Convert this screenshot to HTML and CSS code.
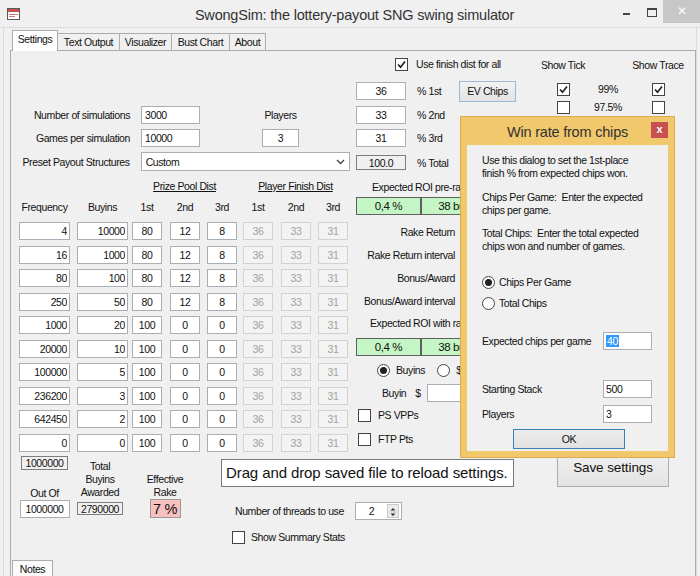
FILE: index.html
```html
<!DOCTYPE html>
<html lang="en">
<head>
  <meta charset="UTF-8" />
  <title>SwongSim: the lottery-payout SNG swing simulator</title>
  <link rel="stylesheet" href="styles.css">
</head>
<body>
  <div class="window">
    <div class="titlebar">
      <div>
        <svg class="app-icon" width="13" height="12" viewBox="0 0 13 12">
          <rect x="0.5" y="0.5" width="12" height="11" fill="#fff" stroke="#5a5a5a"/>
          <rect x="1" y="1" width="11" height="3" fill="#c4504c"/>
          <rect x="2" y="6" width="9" height="1" fill="#d27a78"/>
          <rect x="2" y="8" width="6" height="1" fill="#d27a78"/>
        </svg>
      </div>
      <div class="title">SwongSim: the lottery-payout SNG swing simulator</div>
      <div class="caption">
        <span class="cap-min"></span>
        <span class="cap-max"></span>
        <span class="cap-close">&#x2715;</span>
      </div>
    </div>

    <div class="client">
      <div class="tabs">
        <div class="tab active t-settings">Settings</div>
        <div class="tab t-text">Text Output</div>
        <div class="tab t-vis">Visualizer</div>
        <div class="tab t-bust">Bust Chart</div>
        <div class="tab t-about">About</div>
      </div>

      <div class="page">
        <div class="top">
          <!-- left: run settings + payout table -->
          <div class="left">
            <div class="frow first">
              <span class="lbl">Number of simulations</span>
              <input class="tb w59" value="3000">
              <span class="players-lbl">Players</span>
            </div>
            <div class="frow">
              <span class="lbl">Games per simulation</span>
              <input class="tb w59" value="10000">
              <input class="tb c players-tb" value="3">
            </div>
            <div class="frow preset">
              <span class="lbl">Preset Payout Structures</span>
              <div class="combo">
                <span>Custom</span>
                <svg width="9" height="6" viewBox="0 0 9 6"><path d="M1 1l3.5 3.5L8 1" fill="none" stroke="#444" stroke-width="1.3"/></svg>
              </div>
            </div>

            <div class="dist-head">
              <span class="u pool">Prize Pool Dist</span>
              <span class="u finish-dist">Player Finish Dist</span>
            </div>

            <div class="col-head">
              <span class="wide">Frequency</span><span class="wide">Buyins</span>
              <span>1st</span><span>2nd</span><span>3rd</span>
              <span>1st</span><span>2nd</span><span>3rd</span>
            </div>

            <div class="grid">
              <input class="tb r w51" value="4"><input class="tb r w51" value="10000"><input class="tb c w30" value="80"><input class="tb c w30" value="12"><input class="tb c w30" value="8"><input class="tb c w30 dis" value="36"><input class="tb c w30 dis" value="33"><input class="tb c w30 dis" value="31">
              <input class="tb r w51" value="16"><input class="tb r w51" value="1000"><input class="tb c w30" value="80"><input class="tb c w30" value="12"><input class="tb c w30" value="8"><input class="tb c w30 dis" value="36"><input class="tb c w30 dis" value="33"><input class="tb c w30 dis" value="31">
              <input class="tb r w51" value="80"><input class="tb r w51" value="100"><input class="tb c w30" value="80"><input class="tb c w30" value="12"><input class="tb c w30" value="8"><input class="tb c w30 dis" value="36"><input class="tb c w30 dis" value="33"><input class="tb c w30 dis" value="31">
              <input class="tb r w51" value="250"><input class="tb r w51" value="50"><input class="tb c w30" value="80"><input class="tb c w30" value="12"><input class="tb c w30" value="8"><input class="tb c w30 dis" value="36"><input class="tb c w30 dis" value="33"><input class="tb c w30 dis" value="31">
              <input class="tb r w51" value="1000"><input class="tb r w51" value="20"><input class="tb c w30" value="100"><input class="tb c w30" value="0"><input class="tb c w30" value="0"><input class="tb c w30 dis" value="36"><input class="tb c w30 dis" value="33"><input class="tb c w30 dis" value="31">
              <input class="tb r w51" value="20000"><input class="tb r w51" value="10"><input class="tb c w30" value="100"><input class="tb c w30" value="0"><input class="tb c w30" value="0"><input class="tb c w30 dis" value="36"><input class="tb c w30 dis" value="33"><input class="tb c w30 dis" value="31">
              <input class="tb r w51" value="100000"><input class="tb r w51" value="5"><input class="tb c w30" value="100"><input class="tb c w30" value="0"><input class="tb c w30" value="0"><input class="tb c w30 dis" value="36"><input class="tb c w30 dis" value="33"><input class="tb c w30 dis" value="31">
              <input class="tb r w51" value="236200"><input class="tb r w51" value="3"><input class="tb c w30" value="100"><input class="tb c w30" value="0"><input class="tb c w30" value="0"><input class="tb c w30 dis" value="36"><input class="tb c w30 dis" value="33"><input class="tb c w30 dis" value="31">
              <input class="tb r w51" value="642450"><input class="tb r w51" value="2"><input class="tb c w30" value="100"><input class="tb c w30" value="0"><input class="tb c w30" value="0"><input class="tb c w30 dis" value="36"><input class="tb c w30 dis" value="33"><input class="tb c w30 dis" value="31">
              <input class="tb r w51" value="0"><input class="tb r w51" value="0"><input class="tb c w30" value="100"><input class="tb c w30" value="0"><input class="tb c w30" value="0"><input class="tb c w30 dis" value="36"><input class="tb c w30 dis" value="33"><input class="tb c w30 dis" value="31">
            </div>
          </div>

          <!-- right: finish dist, ROI, rake -->
          <div class="right">
            <div class="finish">
              <div class="chkrow use-all">
                <span class="chk"><svg width="11" height="11" viewBox="0 0 11 11"><path d="M2 5.5l2.5 2.7L9 2.5" fill="none" stroke="#222" stroke-width="1.7"/></svg></span>
                <span>Use finish dist for all</span>
              </div>
              <div class="pct-row first">
                <input class="tb c w50" value="36"><span class="pct-lbl">% 1st</span>
                <button class="btn ev">EV Chips</button>
              </div>
              <div class="pct-row"><input class="tb c w50" value="33"><span class="pct-lbl">% 2nd</span></div>
              <div class="pct-row"><input class="tb c w50" value="31"><span class="pct-lbl">% 3rd</span></div>
              <div class="pct-row total"><span class="ro w50">100.0</span><span class="pct-lbl">% Total</span></div>

              <div class="roi-lbl pre">Expected ROI pre-rake</div>
              <div class="green-pair"><span class="green g1">0,4 %</span><span class="green g2">38 buyins</span></div>

              <div class="rr-row first"><span class="rr-lbl">Rake Return</span><input class="tb w60"></div>
              <div class="rr-row"><span class="rr-lbl">Rake Return interval</span><input class="tb w60"></div>
              <div class="rr-row"><span class="rr-lbl">Bonus/Award</span><input class="tb w60"></div>
              <div class="rr-row"><span class="rr-lbl">Bonus/Award interval</span><input class="tb w60"></div>

              <div class="roi-lbl with">Expected ROI with rake</div>
              <div class="green-pair second"><span class="green g1">0,4 %</span><span class="green g2">38 buyins</span></div>

              <div class="radio-row">
                <span class="radio on"></span><span class="rl">Buyins</span>
                <span class="radio r2"></span><span class="rl">$</span>
              </div>
              <div class="buyin-row"><span>Buyin</span><span class="dollar">$</span><input class="tb w70"></div>
              <div class="chkrow ps"><span class="chk"></span><span>PS VPPs</span></div>
              <div class="chkrow ftp"><span class="chk"></span><span>FTP Pts</span></div>
            </div>

            <div class="ticks">
              <div class="tick-row head"><span>Show Tick</span><span></span><span>Show Trace</span></div>
              <div class="tick-row first">
                <span class="chk"><svg width="11" height="11" viewBox="0 0 11 11"><path d="M2 5.5l2.5 2.7L9 2.5" fill="none" stroke="#222" stroke-width="1.7"/></svg></span>
                <span>99%</span>
                <span class="chk"><svg width="11" height="11" viewBox="0 0 11 11"><path d="M2 5.5l2.5 2.7L9 2.5" fill="none" stroke="#222" stroke-width="1.7"/></svg></span>
              </div>
              <div class="tick-row"><span class="chk"></span><span>97.5%</span><span class="chk"></span></div>
            </div>
          </div>
        </div>

        <div class="bottom">
          <div class="totals">
            <div class="tcol c1">
              <span class="ro small first">1000000</span>
              <span class="outof">Out Of</span>
              <input class="tb c w50" value="1000000">
            </div>
            <div class="tcol c2">
              <span class="tlabel">Total<br>Buyins<br>Awarded</span>
              <span class="ro small">2790000</span>
            </div>
            <div class="tcol c3">
              <span class="tlabel">Effective<br>Rake</span>
              <span class="rake">7 %</span>
            </div>
          </div>

          <div class="middle">
            <div class="drop">Drag and drop saved file to reload settings.</div>
            <div class="threads">
              <span class="threads-lbl">Number of threads to use</span>
              <div class="spin">
                <span class="spin-val">2</span>
                <span class="spin-btns"><svg width="10" height="14" viewBox="0 0 10 14"><path d="M5 3L7.5 5.5H2.5Z M2.5 8.5H7.5L5 11Z" fill="#333"/><path d="M1 7H9" stroke="#c9c9c9"/></svg></span>
              </div>
            </div>
            <div class="chkrow summary"><span class="chk"></span><span>Show Summary Stats</span></div>
          </div>

          <button class="btn save">Save settings</button>
        </div>

        <div class="notes-strip"><div class="tab notes">Notes</div></div>
      </div>
    </div>

    <div class="dialog">
      <div class="dlg-title">
        <span></span>
        <span class="dlg-caption">Win rate from chips</span>
        <span class="dlg-close">x</span>
      </div>
      <div class="dlg-body">
        <p class="dlg-text p1">Use this dialog to set the 1st-place<br>finish % from expected chips won.</p>
        <p class="dlg-text p2">Chips Per Game:&nbsp; Enter the expected<br>chips per game.</p>
        <p class="dlg-text p3">Total Chips:&nbsp; Enter the total expected<br>chips won and number of games.</p>
        <div class="dlg-radio r1"><span class="radio on"></span><span>Chips Per Game</span></div>
        <div class="dlg-radio r2"><span class="radio"></span><span>Total Chips</span></div>
        <div class="dlg-field f1"><span>Expected chips per game</span><span class="tb dlg-tb"><span class="sel">40</span></span></div>
        <div class="dlg-field f2"><span>Starting Stack</span><input class="tb dlg-tb" value="500"></div>
        <div class="dlg-field f3"><span>Players</span><input class="tb dlg-tb" value="3"></div>
        <button class="btn ok">OK</button>
      </div>
    </div>
  </div>
</body>
</html>
```

FILE: styles.css
```css
* {
  box-sizing: border-box;
}

body {
  margin: 0;
  background-color: #f0f0f0;
  font-family: "Liberation Sans", sans-serif;
  font-size: 10.5px;
  letter-spacing: -0.4px;
  color: #111;
}

.window {
  position: relative;
  width: 700px;
  height: 576px;
  overflow: hidden;
  background-color: #f0f0f0;
}

/* title bar */
.titlebar {
  display: grid;
  grid-template-columns: 100px 1fr 100px;
  height: 28px;
  border-bottom: 1px solid #dadada;
}

.app-icon {
  display: block;
  margin: 8px 0 0 7px;
}

.title {
  padding-left: 9px;
  text-align: center;
  font-size: 14.5px;
  letter-spacing: -0.2px;
  line-height: 30px;
  color: #333;
  white-space: nowrap;
}

.caption {
  display: flex;
  justify-content: flex-end;
  align-items: flex-start;
}

.cap-min {
  width: 7px;
  height: 2px;
  margin: 13px 17px 0 0;
  background: #444;
}

.cap-max {
  width: 10px;
  height: 9px;
  margin: 8px 6px 0 0;
  border: 1px solid #444;
  border-top-width: 2px;
}

.cap-close {
  width: 37px;
  height: 23px;
  background: #c7c7c7;
  color: #fff;
  text-align: center;
  line-height: 23px;
  font-size: 12px;
}

/* client + tabs */
.client {
  width: 694px;
  height: 548px;
  margin-left: 3px;
  border-left: 1px solid #dadada;
  border-right: 1px solid #dadada;
}

.tabs {
  display: flex;
  align-items: flex-end;
  height: 22px;
  padding-left: 8px;
}

.tab {
  height: 17px;
  margin-left: -1px;
  border: 1px solid #acacac;
  border-bottom: none;
  background: #f0f0f0;
  text-align: center;
  line-height: 16px;
  white-space: nowrap;
}

.tab:first-child {
  margin-left: 0;
}

.tab.active {
  position: relative;
  z-index: 1;
  height: 21px;
  margin-bottom: -1px;
  background: #fff;
  line-height: 17px;
}

.t-settings { width: 46px; }
.t-text { width: 63px; }
.t-vis { width: 53px; }
.t-bust { width: 59px; }
.t-about { width: 37px; }

.page {
  width: 686px;
  height: 526px;
  margin-left: 6px;
  border: 1px solid #acacac;
  border-bottom: none;
}

.top {
  display: flex;
  height: 401px;
}

/* generic controls */
.tb {
  height: 18px;
  margin: 0;
  padding: 0 3px;
  border: 1px solid #abadb3;
  background: #fff;
  font: inherit;
  letter-spacing: inherit;
  color: #111;
  outline: none;
}

.tb.r { text-align: right; padding-right: 2px; }
.tb.c { text-align: center; padding: 0 1px; }

.tb.dis {
  border-color: #d2d2d2;
  background: #f3f3f3;
  color: #a2a2a2;
}

.w30 { width: 30px; }
.w50 { width: 50px; }
.w51 { width: 51px; }
.w59 { width: 59px; }
.w60 { width: 60px; }
.w70 { width: 70px; }

.ro {
  display: flex;
  align-items: center;
  justify-content: center;
  height: 15px;
  border: 1px solid #7d7d7d;
  background: #f0f0f0;
}

.chk {
  flex: none;
  width: 13px;
  height: 13px;
  border: 1px solid #444;
  background: #fff;
}

.chk svg {
  display: block;
}

.radio {
  flex: none;
  display: flex;
  align-items: center;
  justify-content: center;
  width: 13px;
  height: 13px;
  border: 1px solid #444;
  border-radius: 50%;
  background: #fff;
}

.radio.on::after {
  content: "";
  width: 7px;
  height: 7px;
  border-radius: 50%;
  background: #222;
}

.btn {
  margin: 0;
  padding: 0;
  border: 1px solid #adadad;
  background: linear-gradient(#f2f2f2, #e3e3e3);
  font: inherit;
  letter-spacing: inherit;
  color: #111;
}

.chkrow {
  display: flex;
  align-items: center;
  height: 14px;
  white-space: nowrap;
}

/* left column */
.left {
  width: 339px;
}

.frow {
  display: flex;
  align-items: center;
  height: 18px;
  margin-top: 5px;
  white-space: nowrap;
}

.frow.first {
  margin-top: 55px;
}

.frow .lbl {
  width: 119px;
  margin-right: 11px;
  text-align: right;
}

.players-lbl {
  width: 37px;
  margin-left: 62px;
  text-align: center;
}

.players-tb {
  width: 37px;
  margin-left: 62px;
}

.frow.preset {
  height: 19px;
}

.combo {
  display: flex;
  align-items: center;
  justify-content: space-between;
  width: 210px;
  height: 19px;
  padding: 0 4px;
  border: 1px solid #abadb3;
  background: #fff;
}

.dist-head {
  display: flex;
  height: 14px;
  margin-top: 8px;
  line-height: 14px;
  white-space: nowrap;
}

.u {
  width: 105px;
  text-align: center;
  text-decoration: underline;
}

.pool { margin-left: 121px; }
.finish-dist { margin-left: 6px; }

.col-head,
.grid {
  display: grid;
  grid-template-columns: 58px 55px 38px 37px 36px 38px 37px 30px;
  padding-left: 8px;
}

.col-head {
  height: 14px;
  margin-top: 7px;
  line-height: 14px;
}

.col-head span {
  width: 30px;
  text-align: center;
}

.col-head .wide {
  width: 51px;
}

.grid {
  row-gap: 5.5px;
  margin-top: 8px;
}

/* right column */
.right {
  display: flex;
  flex: 1;
}

.finish {
  width: 180px;
  white-space: nowrap;
}

.use-all {
  margin-top: 6px;
  padding-left: 45px;
}

.use-all .chk {
  margin-right: 8px;
}

.pct-row {
  display: flex;
  align-items: center;
  height: 18px;
  margin-top: 5px;
}

.pct-row input,
.pct-row .ro {
  margin-left: 6px;
}

.pct-row.first {
  height: 20px;
  margin-top: 10px;
}

.pct-row.total {
  height: 15px;
  margin-top: 8px;
}

.pct-lbl {
  width: 42px;
  margin-left: 11px;
}

.btn.ev {
  width: 57px;
  height: 21px;
  border-color: #9cb8d6;
}

.roi-lbl {
  height: 14px;
  line-height: 14px;
}

.roi-lbl.pre {
  margin-top: 10px;
  padding-left: 22px;
}

.roi-lbl.with {
  margin-top: 6px;
  padding-left: 20px;
}

.green-pair {
  display: flex;
  height: 18px;
  margin: 3px 0 0 6px;
}

.green-pair.second {
  margin-top: 8px;
}

.green {
  display: flex;
  align-items: center;
  justify-content: center;
  height: 18px;
  border: 1px solid #5f5f5f;
  background: #c4f5c4;
  font-size: 11.5px;
}

.g1 { width: 65px; }
.g2 { width: 80px; }

.rr-row {
  display: flex;
  align-items: center;
  height: 18px;
  margin-top: 5px;
}

.rr-row.first {
  margin-top: 8px;
}

.rr-lbl {
  width: 105px;
  margin-right: 7px;
  text-align: right;
}

.radio-row {
  display: flex;
  align-items: center;
  height: 18px;
  margin-top: 5px;
  padding-left: 27px;
}

.radio-row .rl {
  margin-left: 6px;
}

.radio-row .r2 {
  margin-left: 12px;
}

.buyin-row {
  display: flex;
  align-items: center;
  height: 18px;
  margin-top: 5px;
  padding-left: 32px;
}

.buyin-row .dollar {
  margin: 0 6px 0 9px;
}

.chkrow.ps,
.chkrow.ftp {
  height: 18px;
  padding-left: 8px;
}

.chkrow.ps { margin-top: 4px; }
.chkrow.ftp { margin-top: 6px; }

.ps .chk,
.ftp .chk {
  margin-right: 7px;
}

.ticks {
  flex: 1;
  padding-left: 10px;
}

.tick-row {
  display: grid;
  grid-template-columns: 46px 44px 56px;
  align-items: center;
  justify-items: center;
  height: 14px;
  margin-top: 4px;
  white-space: nowrap;
}

.tick-row.head { margin-top: 7px; }
.tick-row.first { margin-top: 10px; }

/* bottom strip */
.bottom {
  display: flex;
  align-items: flex-start;
  height: 108px;
}

.totals {
  display: flex;
  align-items: flex-start;
  width: 210px;
  padding-left: 8px;
}

.tcol {
  display: flex;
  flex-direction: column;
  align-items: center;
  text-align: center;
}

.c1 { width: 51px; margin-right: 7px; }
.c2 { width: 46px; margin-right: 22px; }
.c3 { width: 40px; }

.ro.small {
  height: 14px;
  padding: 0 1px;
}

.c1 .ro.small {
  width: 47px;
  margin-top: 4px;
}

.c2 .ro.small {
  width: 46px;
  height: 13px;
  margin-top: 3px;
}

.outof {
  height: 12px;
  margin-top: 17px;
  line-height: 12px;
}

.c1 input {
  margin-top: 1px;
}

.tlabel {
  line-height: 13px;
  white-space: nowrap;
}

.c2 .tlabel { margin-top: 8px; }
.c3 .tlabel { margin-top: 21px; }

.rake {
  display: flex;
  align-items: center;
  justify-content: center;
  width: 31px;
  height: 19px;
  border: 1px solid #9a9a9a;
  background: #f9c0c0;
  font-size: 14.5px;
}

.middle {
  width: 293px;
}

.drop {
  height: 28px;
  margin-top: 7px;
  padding-left: 4px;
  border: 1px solid #7a7a7a;
  background: #fff;
  font-size: 15px;
  letter-spacing: -0.1px;
  line-height: 26px;
  white-space: nowrap;
}

.threads {
  display: flex;
  align-items: center;
  height: 18px;
  margin-top: 15px;
  padding-left: 14px;
}

.threads-lbl {
  width: 120px;
  white-space: nowrap;
}

.spin {
  display: flex;
  align-items: center;
  width: 47px;
  height: 18px;
  border: 1px solid #abadb3;
  background: #fff;
}

.spin-val {
  flex: 1;
  text-align: center;
}

.spin-btns {
  display: flex;
  width: 12px;
  height: 14px;
  margin-right: 2px;
  border: 1px solid #c9c9c9;
  background: #ececec;
}

.chkrow.summary {
  margin-top: 10px;
  padding-left: 11px;
}

.summary .chk {
  margin-right: 6px;
}

/* top of this button sits under the dialog */
.btn.save {
  width: 112px;
  height: 40px;
  margin: -5px 0 0 43px;
  font-size: 13.5px;
  letter-spacing: -0.1px;
}

.notes-strip {
  padding-left: 1px;
}

.tab.notes {
  width: 41px;
  height: 18px;
  background: #fafafa;
}

/* win rate dialog, floating over the form */
.dialog {
  position: absolute;
  left: 460px;
  top: 116px;
  width: 215px;
  height: 342px;
  border: 1px solid #dbad4e;
  background: #f2c86c;
}

.dlg-title {
  display: grid;
  grid-template-columns: 24px 1fr 24px;
  height: 28px;
  padding: 0 6px;
}

.dlg-caption {
  text-align: center;
  font-size: 14.5px;
  letter-spacing: -0.2px;
  line-height: 30px;
  color: #333;
  white-space: nowrap;
}

.dlg-close {
  justify-self: end;
  width: 17px;
  height: 16px;
  margin-top: 5px;
  background: #c75050;
  color: #fff;
  text-align: center;
  font-size: 11px;
  font-weight: bold;
  line-height: 14px;
  letter-spacing: 0;
}

.dlg-body {
  height: 306px;
  margin: 0 6px;
  padding: 0 16px 0 15px;
  background: #f0f0f0;
  white-space: nowrap;
}

.dlg-text {
  margin: 0;
  line-height: 12.5px;
}

.dlg-text.p1 { padding-top: 9px; }
.dlg-text.p2 { margin-top: 12px; }
.dlg-text.p3 { margin-top: 11px; }

.dlg-radio {
  display: flex;
  align-items: center;
  height: 14px;
}

.dlg-radio .radio {
  margin-right: 4px;
}

.dlg-radio.r1 { margin-top: 23px; }
.dlg-radio.r2 { margin-top: 7px; }

.dlg-field {
  display: flex;
  align-items: center;
  justify-content: space-between;
  height: 18px;
}

.dlg-field.f1 { margin-top: 22px; }
.dlg-field.f2 { margin-top: 30px; }
.dlg-field.f3 { margin-top: 7px; }

.dlg-tb {
  display: flex;
  align-items: center;
  width: 49px;
  padding-left: 2px;
}

.sel {
  padding: 0 1px;
  background: #3399ff;
  color: #fff;
}

.btn.ok {
  display: block;
  width: 112px;
  height: 20px;
  margin: 6px 0 0 31px;
  border-color: #3c7fb1;
  background: linear-gradient(#ececec, #e1e1e1);
}
```
